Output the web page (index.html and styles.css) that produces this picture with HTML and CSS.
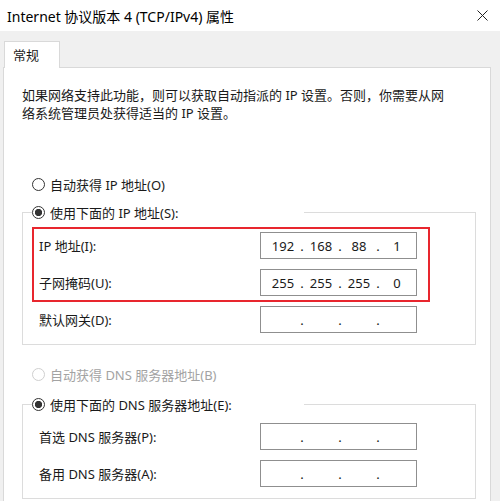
FILE: index.html
```html
<!DOCTYPE html>
<html lang="zh-CN">
<head>
  <meta charset="UTF-8">
  <title>Internet 协议版本 4 (TCP/IPv4) 属性</title>
  <link rel="stylesheet" href="styles.css">
</head>
<body>
  <div class="titlebar">
    <span class="title">Internet 协议版本 4 (TCP/IPv4) 属性</span>
    <svg class="close" width="11" height="11" viewBox="0 0 11 11">
      <path d="M0.5 0.5 L10.5 10.5 M10.5 0.5 L0.5 10.5" stroke="#222" stroke-width="1" fill="none"/>
    </svg>
  </div>

  <div class="tabs">
    <div class="tab">常规</div>
  </div>

  <div class="panel">
    <p class="desc">如果网络支持此功能，则可以获取自动指派的 IP 设置。否则，你需要从网<br>络系统管理员处获得适当的 IP 设置。</p>

    <div class="radio-row first">
      <span class="radio"></span>自动获得 IP 地址(O)
    </div>

    <fieldset class="group ip-group">
      <legend><span class="radio checked"></span>使用下面的 IP 地址(S):</legend>
      <div class="mark">
        <div class="row">
          <label>IP 地址(I):</label>
          <div class="ip"><span>192</span><i>.</i><span>168</span><i>.</i><span>88</span><i>.</i><span>1</span></div>
        </div>
        <div class="row">
          <label>子网掩码(U):</label>
          <div class="ip"><span>255</span><i>.</i><span>255</span><i>.</i><span>255</span><i>.</i><span>0</span></div>
        </div>
      </div>
      <div class="row gateway">
        <label>默认网关(D):</label>
        <div class="ip"><span></span><i>.</i><span></span><i>.</i><span></span><i>.</i><span></span></div>
      </div>
    </fieldset>

    <div class="radio-row disabled">
      <span class="radio"></span>自动获得 DNS 服务器地址(B)
    </div>

    <fieldset class="group dns-group">
      <legend><span class="radio checked"></span>使用下面的 DNS 服务器地址(E):</legend>
      <div class="row">
        <label>首选 DNS 服务器(P):</label>
        <div class="ip"><span></span><i>.</i><span></span><i>.</i><span></span><i>.</i><span></span></div>
      </div>
      <div class="row">
        <label>备用 DNS 服务器(A):</label>
        <div class="ip"><span></span><i>.</i><span></span><i>.</i><span></span><i>.</i><span></span></div>
      </div>
    </fieldset>
  </div>
</body>
</html>
```

FILE: styles.css
```css
body {
  margin: 0;
  height: 501px;
  overflow: hidden;
  background: #f0f0f0;
  font-family: "Noto Sans", "Noto Sans CJK SC", sans-serif;
  font-size: 13px;
  color: #1a1a1a;
}
.titlebar {
  height: 31px;
  background: #fff;
  display: flex;
  align-items: center;
  justify-content: space-between;
  padding: 0 12px 0 7px;
  font-size: 14px;
  color: #000;
}
.close {
  display: block;
}
.tabs {
  height: 36px;
  display: flex;
  align-items: flex-end;
  padding-left: 4px;
}
.tab {
  position: relative;
  z-index: 1;
  width: 56px;
  height: 27px;
  box-sizing: border-box;
  background: #fff;
  border: 1px solid #d9d9d9;
  border-bottom: none;
  margin-bottom: -1px;
  padding-left: 8px;
  line-height: 26px;
}
.panel {
  margin-left: 3px;
  width: 488px;
  height: 440px;
  box-sizing: border-box;
  background: #fff;
  border: 1px solid #d9d9d9;
  padding: 18px 0 0 18px;
}
.desc {
  margin: 0;
  line-height: 18px;
  white-space: nowrap;
}
.radio-row {
  display: flex;
  align-items: center;
  height: 20px;
  padding-left: 10px;
}
.radio-row.first {
  margin-top: 52px;
}
.radio-row.disabled {
  margin-top: 19px;
  color: #a3a3a3;
}
.radio {
  display: inline-block;
  width: 13px;
  height: 13px;
  box-sizing: border-box;
  border: 1px solid #333;
  border-radius: 50%;
  background: #fff;
  margin-right: 5px;
  flex: none;
}
.radio.checked {
  background: radial-gradient(circle, #333 3.3px, #fff 4px);
}
.disabled .radio {
  border-color: #cfcfcf;
}
.group {
  width: 454px;
  min-width: 0;
  box-sizing: border-box;
  margin: 8px 0 0 0;
  border: 1px solid #dcdcdc;
  padding: 0 0 11px 16px;
}
.dns-group {
  margin-top: 10px;
}
.group legend {
  display: flex;
  align-items: center;
  width: 272px;
  height: 20px;
  margin-left: -7px;
  padding: 0;
}
.mark {
  width: 398px;
  box-sizing: border-box;
  margin: 5px 0 0 -7px;
  border: 2px solid #e8262e;
  padding: 3px 11px 4px 5px;
  display: flex;
  flex-direction: column;
  gap: 10px;
}
.row {
  display: flex;
  align-items: center;
  height: 27px;
}
.row label {
  width: 221px;
}
.gateway {
  margin-top: 4px;
}
.dns-group .row:first-of-type {
  margin-top: 9px;
}
.dns-group .row + .row {
  margin-top: 10px;
}
.ip {
  width: 157px;
  height: 27px;
  box-sizing: border-box;
  border: 1px solid #8f8f8f;
  padding-left: 5px;
  display: flex;
  align-items: center;
}
.ip span {
  width: 34px;
  text-align: center;
}
.ip i {
  width: 4px;
  font-style: normal;
  text-align: center;
}
```
